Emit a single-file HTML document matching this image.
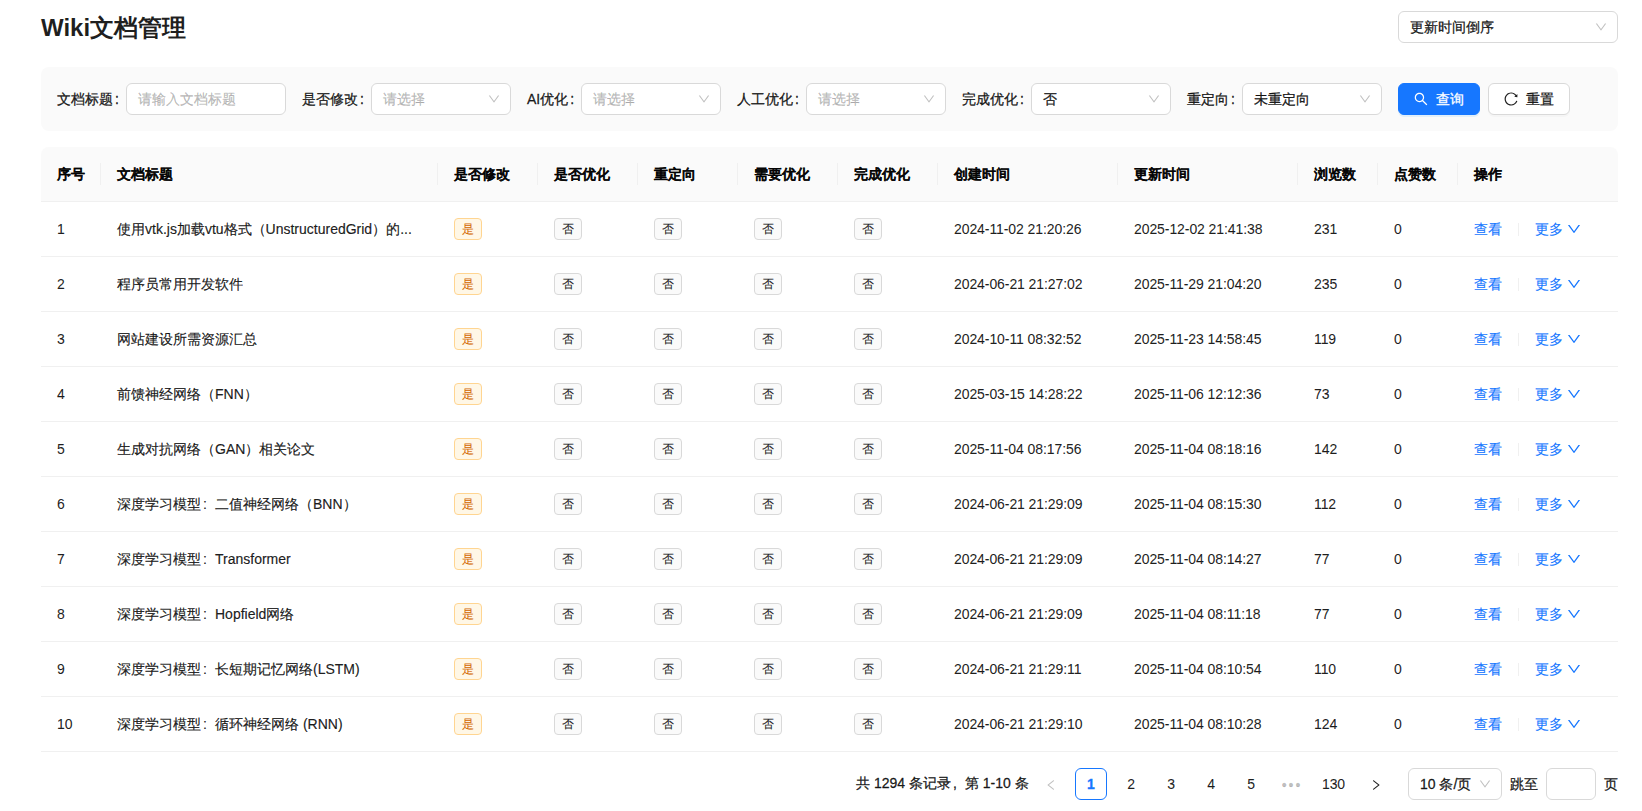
<!DOCTYPE html>
<html><head><meta charset="utf-8">
<style>
*{box-sizing:border-box;margin:0;padding:0}
html,body{width:1642px;height:811px;overflow:hidden;background:#fff}
body{font-family:"Liberation Sans",sans-serif;font-size:14px;line-height:22px;color:rgba(0,0,0,0.88);position:relative;-webkit-text-stroke:0.3px}
.abs{position:absolute}
.title{-webkit-text-stroke:0;left:41px;top:12px;font-size:24px;line-height:32px;font-weight:600;color:rgba(0,0,0,0.88)}
.sel{position:absolute;height:32px;border:1px solid #d9d9d9;border-radius:6px;background:#fff;padding:0 11px;line-height:30px;white-space:nowrap}
.sel .ph{color:rgba(0,0,0,0.25)}
.arr{position:absolute;right:11px;top:50%;width:12px;height:12px;margin-top:-6px}
.panel{left:41px;top:67px;width:1577px;height:64px;background:#fafafa;border-radius:8px}
.lbl{position:absolute;top:88px;white-space:nowrap;line-height:22px}
.btn{position:absolute;top:83px;height:32px;width:82px;border-radius:6px;line-height:30px;font-size:14px;white-space:nowrap}
.btn-p{background:#1677ff;color:#fff;border:1px solid #1677ff;box-shadow:0 2px 0 rgba(5,145,255,0.1)}
.btn-d{background:#fff;border:1px solid #d9d9d9;box-shadow:0 2px 0 rgba(0,0,0,0.02)}
table{position:absolute;left:41px;top:147px;width:1577px;border-collapse:separate;border-spacing:0;table-layout:fixed}
th{-webkit-text-stroke:0.2px;background:#fafafa;font-weight:600;text-align:left;padding:16px;height:55px;border-bottom:1px solid #f0f0f0;position:relative;white-space:nowrap}
th.sep::before{content:"";position:absolute;right:0;top:50%;width:1px;height:22px;margin-top:-11px;background:#f0f0f0}
th:first-child{border-top-left-radius:8px}
th:last-child{border-top-right-radius:8px}
td{-webkit-text-stroke:0.2px;padding:16px;height:55px;border-bottom:1px solid #f0f0f0;white-space:nowrap;overflow:hidden;text-overflow:ellipsis}
.tag{-webkit-text-stroke:0.1px;display:inline-block;height:22px;line-height:20px;padding:0 7px;font-size:12px;border:1px solid #d9d9d9;background:#fafafa;border-radius:4px;vertical-align:top}
.tag.y{color:#d46b08;background:#fff7e6;border-color:#ffd591}
.link{color:#1677ff;-webkit-text-stroke:0.1px}
.dv{display:inline-block;width:1px;height:13px;background:rgba(5,5,5,0.06);vertical-align:middle;margin:0 16px;position:relative;top:-1px}
.col{margin-left:2px}
.n{-webkit-text-stroke:0.1px;letter-spacing:-0.08px}
.fc{display:inline-block;width:14px;padding-left:2px;text-align:left}
.pg{position:absolute;top:768px;height:32px;line-height:32px;text-align:center;white-space:nowrap}
</style></head><body>
<div class="abs title">Wiki文档管理</div>
<div class="sel" style="left:1398px;top:11px;width:220px">更新时间倒序<svg width="12" height="12" viewBox="64 64 896 896" style="position:absolute;right:10px;top:9px"><path fill="rgba(0,0,0,0.25)" d="M884 256h-75c-5.1 0-9.9 2.5-12.9 6.6L512 654.2 227.9 262.6c-3-4.1-7.8-6.6-12.9-6.6h-75c-6.5 0-10.3 7.4-6.5 12.7l352.6 486.1c12.8 17.6 39 17.6 51.7 0l352.6-486.1c3.9-5.3.1-12.7-6.4-12.7z"/></svg></div>

<div class="abs panel"></div>
<div class="lbl" style="left:57px">文档标题<span class="col">:</span></div>
<div class="sel" style="left:126px;top:83px;width:160px"><span class="ph">请输入文档标题</span></div>
<div class="lbl" style="left:302px">是否修改<span class="col">:</span></div>
<div class="sel" style="left:371px;top:83px;width:140px"><span class="ph">请选择</span><svg width="12" height="12" viewBox="64 64 896 896" style="position:absolute;right:10px;top:9px"><path fill="rgba(0,0,0,0.25)" d="M884 256h-75c-5.1 0-9.9 2.5-12.9 6.6L512 654.2 227.9 262.6c-3-4.1-7.8-6.6-12.9-6.6h-75c-6.5 0-10.3 7.4-6.5 12.7l352.6 486.1c12.8 17.6 39 17.6 51.7 0l352.6-486.1c3.9-5.3.1-12.7-6.4-12.7z"/></svg></div>
<div class="lbl" style="left:527px">AI优化<span class="col">:</span></div>
<div class="sel" style="left:581px;top:83px;width:140px"><span class="ph">请选择</span><svg width="12" height="12" viewBox="64 64 896 896" style="position:absolute;right:10px;top:9px"><path fill="rgba(0,0,0,0.25)" d="M884 256h-75c-5.1 0-9.9 2.5-12.9 6.6L512 654.2 227.9 262.6c-3-4.1-7.8-6.6-12.9-6.6h-75c-6.5 0-10.3 7.4-6.5 12.7l352.6 486.1c12.8 17.6 39 17.6 51.7 0l352.6-486.1c3.9-5.3.1-12.7-6.4-12.7z"/></svg></div>
<div class="lbl" style="left:737px">人工优化<span class="col">:</span></div>
<div class="sel" style="left:806px;top:83px;width:140px"><span class="ph">请选择</span><svg width="12" height="12" viewBox="64 64 896 896" style="position:absolute;right:10px;top:9px"><path fill="rgba(0,0,0,0.25)" d="M884 256h-75c-5.1 0-9.9 2.5-12.9 6.6L512 654.2 227.9 262.6c-3-4.1-7.8-6.6-12.9-6.6h-75c-6.5 0-10.3 7.4-6.5 12.7l352.6 486.1c12.8 17.6 39 17.6 51.7 0l352.6-486.1c3.9-5.3.1-12.7-6.4-12.7z"/></svg></div>
<div class="lbl" style="left:962px">完成优化<span class="col">:</span></div>
<div class="sel" style="left:1031px;top:83px;width:140px">否<svg width="12" height="12" viewBox="64 64 896 896" style="position:absolute;right:10px;top:9px"><path fill="rgba(0,0,0,0.25)" d="M884 256h-75c-5.1 0-9.9 2.5-12.9 6.6L512 654.2 227.9 262.6c-3-4.1-7.8-6.6-12.9-6.6h-75c-6.5 0-10.3 7.4-6.5 12.7l352.6 486.1c12.8 17.6 39 17.6 51.7 0l352.6-486.1c3.9-5.3.1-12.7-6.4-12.7z"/></svg></div>
<div class="lbl" style="left:1187px">重定向<span class="col">:</span></div>
<div class="sel" style="left:1242px;top:83px;width:140px">未重定向<svg width="12" height="12" viewBox="64 64 896 896" style="position:absolute;right:10px;top:9px"><path fill="rgba(0,0,0,0.25)" d="M884 256h-75c-5.1 0-9.9 2.5-12.9 6.6L512 654.2 227.9 262.6c-3-4.1-7.8-6.6-12.9-6.6h-75c-6.5 0-10.3 7.4-6.5 12.7l352.6 486.1c12.8 17.6 39 17.6 51.7 0l352.6-486.1c3.9-5.3.1-12.7-6.4-12.7z"/></svg></div>
<div class="btn btn-p" style="left:1398px"><svg width="14" height="14" viewBox="64 64 896 896" style="position:absolute;left:15px;top:8px"><path fill="#fff" d="M909.6 854.5L649.9 594.8C690.2 542.7 712 479 712 412c0-80.2-31.3-155.4-87.9-212.1-56.6-56.7-132-87.9-212.1-87.9s-155.5 31.3-212.1 87.9C143.2 256.5 112 331.8 112 412c0 80.1 31.3 155.5 87.9 212.1C256.5 680.8 331.8 712 412 712c67 0 130.6-21.8 182.7-62l259.7 259.6a8.2 8.2 0 0011.6 0l43.6-43.5a8.2 8.2 0 000-11.6zM570.4 570.4C528 612.7 471.8 636 412 636s-116-23.3-158.4-65.6C211.3 528 188 471.8 188 412s23.3-116.1 65.6-158.4C296 211.3 352.2 188 412 188s116.1 23.2 158.4 65.6S636 352.2 636 412s-23.3 116.1-65.6 158.4z"/></svg><span class="abs" style="left:37px;top:0">查询</span></div>
<div class="btn btn-d" style="left:1488px"><svg width="14" height="14" viewBox="64 64 896 896" style="position:absolute;left:15px;top:8px"><path fill="rgba(0,0,0,0.88)" d="M909.1 209.3l-56.4 44.1C775.8 155.1 656.2 92 521.9 92 290 92 102.3 279.5 102 511.5 101.7 743.7 289.8 932 521.9 932c181.3 0 335.8-115 394.6-276.1 1.5-4.2-.7-8.9-4.9-10.3l-56.7-19.5a8 8 0 00-10.1 4.8c-1.8 5-3.8 10-5.9 14.9-17.3 41-42.1 77.8-73.7 109.4A344.77 344.77 0 01655.9 829c-42.3 17.9-87.4 27-133.8 27-46.5 0-91.5-9.1-133.8-27A341.5 341.5 0 01279 755.2a342.160 342.16 0 01-73.7-109.4c-17.9-42.4-27-87.4-27-133.9s9.1-91.5 27-133.9c17.3-41 42.1-77.8 73.7-109.4 31.6-31.6 68.4-56.4 109.3-73.8 42.3-17.9 87.4-27 133.8-27 46.5 0 91.5 9.1 133.8 27a341.5 341.5 0 01109.3 73.8c9.9 9.9 19.2 20.4 27.8 31.4l-60.2 47a8 8 0 003 14.1l175.6 43c5 1.2 9.9-2.6 9.9-7.7l.8-180.9c-.1-6.6-7.8-10.3-13-6.2z"/></svg><span class="abs" style="left:37px;top:0">重置</span></div>

<table>
<colgroup><col style="width:60px"><col style="width:337px"><col style="width:100px"><col style="width:100px"><col style="width:100px"><col style="width:100px"><col style="width:100px"><col style="width:180px"><col style="width:180px"><col style="width:80px"><col style="width:80px"><col style="width:160px"></colgroup>
<thead><tr>
<th class="sep">序号</th><th class="sep">文档标题</th><th class="sep">是否修改</th><th class="sep">是否优化</th><th class="sep">重定向</th><th class="sep">需要优化</th><th class="sep">完成优化</th><th class="sep">创建时间</th><th class="sep">更新时间</th><th class="sep">浏览数</th><th class="sep">点赞数</th><th>操作</th>
</tr></thead>
<tbody id="tb">
<tr><td class="n">1</td><td>使用vtk.js加载vtu格式（UnstructuredGrid）的...</td><td><span class="tag y">是</span></td><td><span class="tag">否</span></td><td><span class="tag">否</span></td><td><span class="tag">否</span></td><td><span class="tag">否</span></td><td class="n">2024-11-02 21:20:26</td><td class="n">2025-12-02 21:41:38</td><td class="n">231</td><td class="n">0</td><td><span class="link">查看</span><span class="dv"></span><span class="link">更多<svg width="14" height="14" viewBox="64 64 896 896" style="vertical-align:-2px;margin-left:4px"><path fill="#1677ff" d="M884 256h-75c-5.1 0-9.9 2.5-12.9 6.6L512 654.2 227.9 262.6c-3-4.1-7.8-6.6-12.9-6.6h-75c-6.5 0-10.3 7.4-6.5 12.7l352.6 486.1c12.8 17.6 39 17.6 51.7 0l352.6-486.1c3.9-5.3.1-12.7-6.4-12.7z"/></svg></span></td></tr>
<tr><td class="n">2</td><td>程序员常用开发软件</td><td><span class="tag y">是</span></td><td><span class="tag">否</span></td><td><span class="tag">否</span></td><td><span class="tag">否</span></td><td><span class="tag">否</span></td><td class="n">2024-06-21 21:27:02</td><td class="n">2025-11-29 21:04:20</td><td class="n">235</td><td class="n">0</td><td><span class="link">查看</span><span class="dv"></span><span class="link">更多<svg width="14" height="14" viewBox="64 64 896 896" style="vertical-align:-2px;margin-left:4px"><path fill="#1677ff" d="M884 256h-75c-5.1 0-9.9 2.5-12.9 6.6L512 654.2 227.9 262.6c-3-4.1-7.8-6.6-12.9-6.6h-75c-6.5 0-10.3 7.4-6.5 12.7l352.6 486.1c12.8 17.6 39 17.6 51.7 0l352.6-486.1c3.9-5.3.1-12.7-6.4-12.7z"/></svg></span></td></tr>
<tr><td class="n">3</td><td>网站建设所需资源汇总</td><td><span class="tag y">是</span></td><td><span class="tag">否</span></td><td><span class="tag">否</span></td><td><span class="tag">否</span></td><td><span class="tag">否</span></td><td class="n">2024-10-11 08:32:52</td><td class="n">2025-11-23 14:58:45</td><td class="n">119</td><td class="n">0</td><td><span class="link">查看</span><span class="dv"></span><span class="link">更多<svg width="14" height="14" viewBox="64 64 896 896" style="vertical-align:-2px;margin-left:4px"><path fill="#1677ff" d="M884 256h-75c-5.1 0-9.9 2.5-12.9 6.6L512 654.2 227.9 262.6c-3-4.1-7.8-6.6-12.9-6.6h-75c-6.5 0-10.3 7.4-6.5 12.7l352.6 486.1c12.8 17.6 39 17.6 51.7 0l352.6-486.1c3.9-5.3.1-12.7-6.4-12.7z"/></svg></span></td></tr>
<tr><td class="n">4</td><td>前馈神经网络（FNN）</td><td><span class="tag y">是</span></td><td><span class="tag">否</span></td><td><span class="tag">否</span></td><td><span class="tag">否</span></td><td><span class="tag">否</span></td><td class="n">2025-03-15 14:28:22</td><td class="n">2025-11-06 12:12:36</td><td class="n">73</td><td class="n">0</td><td><span class="link">查看</span><span class="dv"></span><span class="link">更多<svg width="14" height="14" viewBox="64 64 896 896" style="vertical-align:-2px;margin-left:4px"><path fill="#1677ff" d="M884 256h-75c-5.1 0-9.9 2.5-12.9 6.6L512 654.2 227.9 262.6c-3-4.1-7.8-6.6-12.9-6.6h-75c-6.5 0-10.3 7.4-6.5 12.7l352.6 486.1c12.8 17.6 39 17.6 51.7 0l352.6-486.1c3.9-5.3.1-12.7-6.4-12.7z"/></svg></span></td></tr>
<tr><td class="n">5</td><td>生成对抗网络（GAN）相关论文</td><td><span class="tag y">是</span></td><td><span class="tag">否</span></td><td><span class="tag">否</span></td><td><span class="tag">否</span></td><td><span class="tag">否</span></td><td class="n">2025-11-04 08:17:56</td><td class="n">2025-11-04 08:18:16</td><td class="n">142</td><td class="n">0</td><td><span class="link">查看</span><span class="dv"></span><span class="link">更多<svg width="14" height="14" viewBox="64 64 896 896" style="vertical-align:-2px;margin-left:4px"><path fill="#1677ff" d="M884 256h-75c-5.1 0-9.9 2.5-12.9 6.6L512 654.2 227.9 262.6c-3-4.1-7.8-6.6-12.9-6.6h-75c-6.5 0-10.3 7.4-6.5 12.7l352.6 486.1c12.8 17.6 39 17.6 51.7 0l352.6-486.1c3.9-5.3.1-12.7-6.4-12.7z"/></svg></span></td></tr>
<tr><td class="n">6</td><td>深度学习模型<span class="fc">:</span>二值神经网络（BNN）</td><td><span class="tag y">是</span></td><td><span class="tag">否</span></td><td><span class="tag">否</span></td><td><span class="tag">否</span></td><td><span class="tag">否</span></td><td class="n">2024-06-21 21:29:09</td><td class="n">2025-11-04 08:15:30</td><td class="n">112</td><td class="n">0</td><td><span class="link">查看</span><span class="dv"></span><span class="link">更多<svg width="14" height="14" viewBox="64 64 896 896" style="vertical-align:-2px;margin-left:4px"><path fill="#1677ff" d="M884 256h-75c-5.1 0-9.9 2.5-12.9 6.6L512 654.2 227.9 262.6c-3-4.1-7.8-6.6-12.9-6.6h-75c-6.5 0-10.3 7.4-6.5 12.7l352.6 486.1c12.8 17.6 39 17.6 51.7 0l352.6-486.1c3.9-5.3.1-12.7-6.4-12.7z"/></svg></span></td></tr>
<tr><td class="n">7</td><td>深度学习模型<span class="fc">:</span>Transformer</td><td><span class="tag y">是</span></td><td><span class="tag">否</span></td><td><span class="tag">否</span></td><td><span class="tag">否</span></td><td><span class="tag">否</span></td><td class="n">2024-06-21 21:29:09</td><td class="n">2025-11-04 08:14:27</td><td class="n">77</td><td class="n">0</td><td><span class="link">查看</span><span class="dv"></span><span class="link">更多<svg width="14" height="14" viewBox="64 64 896 896" style="vertical-align:-2px;margin-left:4px"><path fill="#1677ff" d="M884 256h-75c-5.1 0-9.9 2.5-12.9 6.6L512 654.2 227.9 262.6c-3-4.1-7.8-6.6-12.9-6.6h-75c-6.5 0-10.3 7.4-6.5 12.7l352.6 486.1c12.8 17.6 39 17.6 51.7 0l352.6-486.1c3.9-5.3.1-12.7-6.4-12.7z"/></svg></span></td></tr>
<tr><td class="n">8</td><td>深度学习模型<span class="fc">:</span>Hopfield网络</td><td><span class="tag y">是</span></td><td><span class="tag">否</span></td><td><span class="tag">否</span></td><td><span class="tag">否</span></td><td><span class="tag">否</span></td><td class="n">2024-06-21 21:29:09</td><td class="n">2025-11-04 08:11:18</td><td class="n">77</td><td class="n">0</td><td><span class="link">查看</span><span class="dv"></span><span class="link">更多<svg width="14" height="14" viewBox="64 64 896 896" style="vertical-align:-2px;margin-left:4px"><path fill="#1677ff" d="M884 256h-75c-5.1 0-9.9 2.5-12.9 6.6L512 654.2 227.9 262.6c-3-4.1-7.8-6.6-12.9-6.6h-75c-6.5 0-10.3 7.4-6.5 12.7l352.6 486.1c12.8 17.6 39 17.6 51.7 0l352.6-486.1c3.9-5.3.1-12.7-6.4-12.7z"/></svg></span></td></tr>
<tr><td class="n">9</td><td>深度学习模型<span class="fc">:</span>长短期记忆网络(LSTM)</td><td><span class="tag y">是</span></td><td><span class="tag">否</span></td><td><span class="tag">否</span></td><td><span class="tag">否</span></td><td><span class="tag">否</span></td><td class="n">2024-06-21 21:29:11</td><td class="n">2025-11-04 08:10:54</td><td class="n">110</td><td class="n">0</td><td><span class="link">查看</span><span class="dv"></span><span class="link">更多<svg width="14" height="14" viewBox="64 64 896 896" style="vertical-align:-2px;margin-left:4px"><path fill="#1677ff" d="M884 256h-75c-5.1 0-9.9 2.5-12.9 6.6L512 654.2 227.9 262.6c-3-4.1-7.8-6.6-12.9-6.6h-75c-6.5 0-10.3 7.4-6.5 12.7l352.6 486.1c12.8 17.6 39 17.6 51.7 0l352.6-486.1c3.9-5.3.1-12.7-6.4-12.7z"/></svg></span></td></tr>
<tr><td class="n">10</td><td>深度学习模型<span class="fc">:</span>循环神经网络 (RNN)</td><td><span class="tag y">是</span></td><td><span class="tag">否</span></td><td><span class="tag">否</span></td><td><span class="tag">否</span></td><td><span class="tag">否</span></td><td class="n">2024-06-21 21:29:10</td><td class="n">2025-11-04 08:10:28</td><td class="n">124</td><td class="n">0</td><td><span class="link">查看</span><span class="dv"></span><span class="link">更多<svg width="14" height="14" viewBox="64 64 896 896" style="vertical-align:-2px;margin-left:4px"><path fill="#1677ff" d="M884 256h-75c-5.1 0-9.9 2.5-12.9 6.6L512 654.2 227.9 262.6c-3-4.1-7.8-6.6-12.9-6.6h-75c-6.5 0-10.3 7.4-6.5 12.7l352.6 486.1c12.8 17.6 39 17.6 51.7 0l352.6-486.1c3.9-5.3.1-12.7-6.4-12.7z"/></svg></span></td></tr>
</tbody>
</table>

<div class="pg" style="left:856px;top:767px">共 1294 条记录<span class="fc">,</span>第 1-10 条</div>
<svg width="12" height="12" viewBox="64 64 896 896" style="position:absolute;left:1045px;top:779px"><path fill="rgba(0,0,0,0.25)" d="M724 218.3V141c0-6.7-7.7-10.4-12.9-6.3L260.3 486.8a31.86 31.86 0 000 50.3l450.8 352.1c5.3 4.1 12.9.4 12.9-6.3v-77.3c0-4.9-2.3-9.6-6.1-12.6l-360-281 360-281.1c3.8-3 6.1-7.7 6.1-12.6z"/></svg>
<div class="pg" style="left:1075px;width:32px;border:1px solid #1677ff;border-radius:6px;line-height:30px;color:#1677ff;font-weight:600">1</div>
<div class="pg n" style="left:1115px;width:32px">2</div>
<div class="pg n" style="left:1155px;width:32px">3</div>
<div class="pg n" style="left:1195px;width:32px">4</div>
<div class="pg n" style="left:1235px;width:32px">5</div>
<div class="pg" style="left:1276px;width:32px;color:rgba(0,0,0,0.25);letter-spacing:2px;padding-top:1px">•••</div>
<div class="pg n" style="left:1315px;width:37px">130</div>
<svg width="12" height="12" viewBox="64 64 896 896" style="position:absolute;left:1370px;top:779px"><path fill="rgba(0,0,0,0.88)" d="M765.7 486.8L314.9 134.7A7.97 7.97 0 00302 141v77.3c0 4.9 2.3 9.6 6.1 12.6l360 281.1-360 281.1c-3.9 3-6.1 7.7-6.1 12.6V883c0 6.7 7.7 10.4 12.9 6.3l450.8-352.1a31.96 31.96 0 000-50.4z"/></svg>
<div class="sel" style="left:1408px;top:768px;width:94px">10 条/页<svg width="12" height="12" viewBox="64 64 896 896" style="position:absolute;right:10px;top:9px"><path fill="rgba(0,0,0,0.25)" d="M884 256h-75c-5.1 0-9.9 2.5-12.9 6.6L512 654.2 227.9 262.6c-3-4.1-7.8-6.6-12.9-6.6h-75c-6.5 0-10.3 7.4-6.5 12.7l352.6 486.1c12.8 17.6 39 17.6 51.7 0l352.6-486.1c3.9-5.3.1-12.7-6.4-12.7z"/></svg></div>
<div class="pg" style="left:1510px">跳至</div>
<div class="sel" style="left:1546px;top:768px;width:50px"></div>
<div class="pg" style="left:1604px">页</div>
</body></html>
